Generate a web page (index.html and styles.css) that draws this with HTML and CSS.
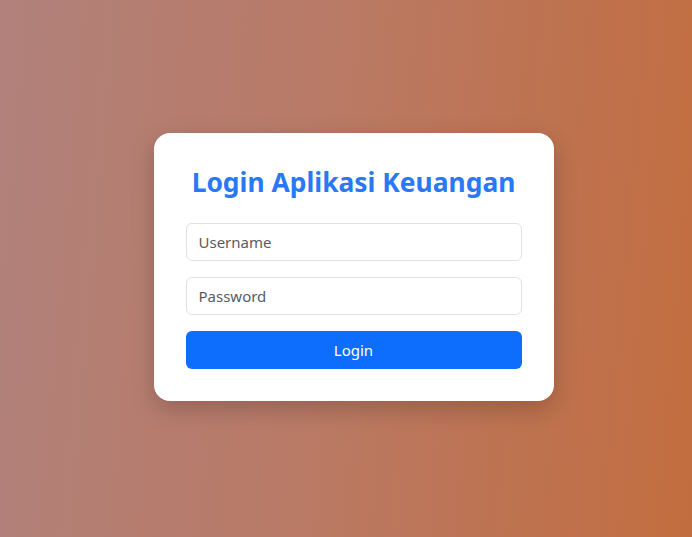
FILE: index.html
```html
<!DOCTYPE html>
<html lang="id">
<head>
<meta charset="utf-8">
<title>Login Aplikasi Keuangan</title>
<link rel="stylesheet" href="styles.css">
</head>
<body>
<main class="page">
  <form class="card">
    <h1 class="title">Login Aplikasi Keuangan</h1>
    <input class="field" type="text" placeholder="Username">
    <input class="field" type="password" placeholder="Password">
    <button class="btn" type="button">Login</button>
  </form>
</main>
</body>
</html>
```
FILE: styles.css
```css
* { box-sizing: border-box; }
html, body { height: 100%; }
body {
  margin: 0;
  font-family: "Noto Sans", "Open Sans", sans-serif;
  background: linear-gradient(95deg, #b1817b 0%, #b97a66 45%, #c26d3f 100%);
}
.page {
  height: 100%;
  display: flex;
  align-items: center;
  justify-content: center;
  padding-left: 15px;
  padding-bottom: 3px;
}
.card {
  width: 400px;
  background: #fff;
  border-radius: 16px;
  padding: 32px;
  box-shadow: 0 8px 24px rgba(0, 0, 0, 0.2);
  display: flex;
  flex-direction: column;
}
.title {
  margin: 0 0 24px;
  text-align: center;
  color: #2a78f6;
  font-size: 26.4px;
  font-weight: 700;
  line-height: 34px;
}
.field {
  height: 38px;
  border: 1px solid #dee2e6;
  border-radius: 6px;
  padding: 0 12px;
  font-family: inherit;
  font-size: 15px;
  color: #212529;
  margin-bottom: 16px;
  outline: none;
}
.field::placeholder { color: #595c5f; }
.btn {
  height: 38px;
  border: none;
  border-radius: 6px;
  background: #0d6efd;
  color: #fff;
  font-family: inherit;
  font-size: 15px;
}
```
